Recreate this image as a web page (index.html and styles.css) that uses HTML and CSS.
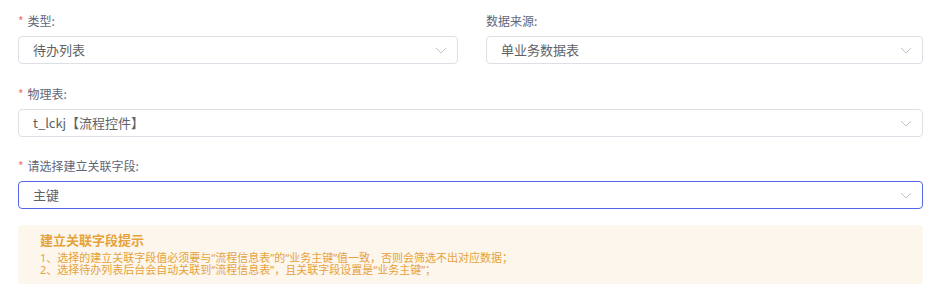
FILE: index.html
```html
<!DOCTYPE html>
<html lang="zh-CN">
<head>
    <meta charset="UTF-8">
    <title>关联字段配置</title>
    <link rel="stylesheet" href="styles.css">
</head>
<body>
    <form class="form">
        <div class="form-row">
            <div class="form-item">
                <label class="label is-required">类型:</label>
                <div class="select">
                    <span class="select-value">待办列表</span>
                    <svg class="arrow" width="12" height="7" viewBox="0 0 12 7"><path d="M1 1l5 5 5-5" fill="none" stroke="#c0c4cc" stroke-width="1"/></svg>
                </div>
            </div>
            <div class="form-item">
                <label class="label">数据来源:</label>
                <div class="select">
                    <span class="select-value">单业务数据表</span>
                    <svg class="arrow" width="12" height="7" viewBox="0 0 12 7"><path d="M1 1l5 5 5-5" fill="none" stroke="#c0c4cc" stroke-width="1"/></svg>
                </div>
            </div>
        </div>

        <div class="form-item">
            <label class="label is-required">物理表:</label>
            <div class="select">
                <span class="select-value">t_lckj【流程控件】</span>
                <svg class="arrow" width="12" height="7" viewBox="0 0 12 7"><path d="M1 1l5 5 5-5" fill="none" stroke="#c0c4cc" stroke-width="1"/></svg>
            </div>
        </div>

        <div class="form-item">
            <label class="label is-required">请选择建立关联字段:</label>
            <div class="select is-focus">
                <span class="select-value">主键</span>
                <svg class="arrow" width="12" height="7" viewBox="0 0 12 7"><path d="M1 1l5 5 5-5" fill="none" stroke="#c0c4cc" stroke-width="1"/></svg>
            </div>
        </div>

        <div class="tip">
            <div class="tip-title">建立关联字段提示</div>
            <p class="tip-line">1、选择的建立关联字段值必须要与“流程信息表”的“业务主键”值一致，否则会筛选不出对应数据；</p>
            <p class="tip-line">2、选择待办列表后台会自动关联到“流程信息表”，且关联字段设置是“业务主键”；</p>
        </div>
    </form>
</body>
</html>
```

FILE: styles.css
```css
body {
    margin: 0;
    font-family: "Noto Sans CJK SC", "Noto Sans", sans-serif;
    background-color: #ffffff;
    color: #606266;
}
.form {
    padding: 12px 18px 0 18px;
}
.form-row {
    display: grid;
    grid-template-columns: 440px 437px;
    column-gap: 28px;
    margin-bottom: 21px;
}
.form-row .form-item {
    margin-bottom: 0;
}
.form-item {
    margin-bottom: 20px;
}
.label {
    display: block;
    font-size: 12px;
    line-height: 18px;
    height: 18px;
    margin-bottom: 6px;
    color: #5f6779;
}
.label.is-required::before {
    content: "*";
    color: #f56c6c;
    margin-right: 4px;
}
.select {
    box-sizing: border-box;
    height: 28px;
    border: 1px solid #dcdfe6;
    border-radius: 4px;
    display: flex;
    align-items: center;
    padding: 0 10px 0 14px;
}
.select.is-focus {
    border-color: #5366e4;
}
.select-value {
    flex: 1;
    font-size: 13px;
    color: #606266;
    line-height: 26px;
}
.arrow {
    display: block;
}
.tip {
    margin-top: -4px;
    background-color: #fdf6ec;
    border-radius: 4px;
    padding: 6px 22px 8px 22px;
    color: #e6a23c;
}
.tip-title {
    font-size: 13px;
    font-weight: bold;
    line-height: 18px;
    margin-bottom: 3px;
}
.tip-line {
    margin: 0;
    font-family: "Noto Sans", "Noto Sans CJK SC", sans-serif;
    font-size: 11px;
    line-height: 12px;
}
```
